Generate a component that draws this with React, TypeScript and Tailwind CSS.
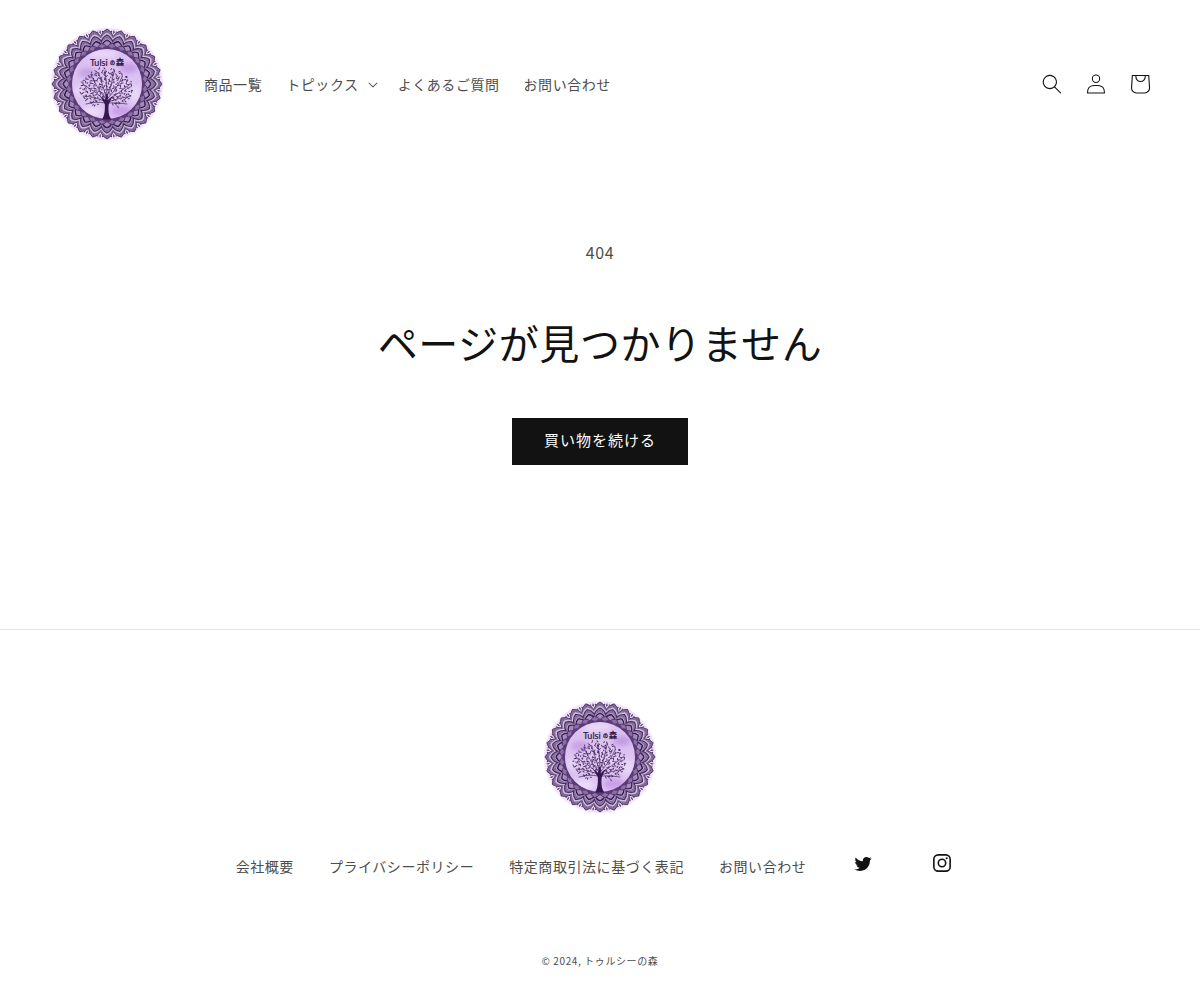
import React from 'react'

const navItems = [
  { label: '商品一覧' },
  { label: 'トピックス', menu: true },
  { label: 'よくあるご質問' },
  { label: 'お問い合わせ' },
]

const footerLinks = ['会社概要', 'プライバシーポリシー', '特定商取引法に基づく表記', 'お問い合わせ']

const PETALS = 24

const polar = (r: number, deg: number) => {
  const a = (deg * Math.PI) / 180
  return `${(56 + r * Math.sin(a)).toFixed(2)} ${(56 - r * Math.cos(a)).toFixed(2)}`
}

// ring of pointed petals around the logo centre, with slightly rounded sides
const ring = (tip: number, valley: number, turn = 0) => {
  const step = 360 / PETALS
  let d = `M${polar(valley, turn - step / 2)}`
  for (let i = 0; i < PETALS; i++) {
    const mid = turn + i * step
    const bulge = valley + (tip - valley) * 0.72
    d += `Q${polar(bulge, mid - step * 0.34)} ${polar(tip, mid)}`
    d += `Q${polar(bulge, mid + step * 0.34)} ${polar(valley, mid + step / 2)}`
  }
  return d + 'z'
}

const petals = Array.from({ length: PETALS }, (_, i) => (i * 360) / PETALS)

// leaves spread over the crown, pointing away from the trunk top
const leaves = Array.from({ length: 230 }, (_, i) => {
  const r = Math.sqrt((i + 0.5) / 230)
  const a = i * 2.39996
  const x = 55.5 + Math.cos(a) * r * 26.5 + Math.sin(i * 3.1) * 0.9
  const y = 60.5 + Math.sin(a) * r * 20 + Math.cos(i * 5.3) * 0.9
  const turn = (Math.atan2(x - 55.5, 72 - y) * 180) / Math.PI + (i % 2 ? 38 : -38)
  return { x, y, turn, size: 1.1 + (i % 3) * 0.25 }
}).filter(({ x, y }) => y < 70 || (Math.abs(x - 55.5) > 6 && y < 79))

const branches = [
  'M55 74Q46 69 32 68',
  'M55 73Q44 63 33 57',
  'M55 71Q47 62 40 47',
  'M55.500 70Q52 58 48 46',
  'M56 70Q56 56 54 43',
  'M56 69Q61 56 63 44',
  'M56 71Q66 61 71 49',
  'M56.500 72Q68 65 78 57',
  'M57 74Q67 70 80 68',
  'M56 75Q66 74 76 76',
  'M54 75Q46 73 35 76',
]

const Logo = ({ id }: { id: string }) => (
  <svg viewBox="0 0 112 112" className="size-28" role="img" aria-label="Tulsiの森">
    <defs>
      <filter id={`${id}-soft`} x="-50%" y="-50%" width="200%" height="200%">
        <feGaussianBlur stdDeviation="2.5" />
      </filter>
      <clipPath id={`${id}-disc`}>
        <circle cx="56" cy="56" r="35" />
      </clipPath>
    </defs>

    <circle cx="56" cy="56" r="56" fill="#f3e4fc" />
    {petals.map((deg) => (
      <g key={deg} transform={`rotate(${deg + 7.5} 56 56)`} fill="#4f3269">
        <path d="M56 1.500l.8 2.200-.8 2.200-.8-2.200z" />
        <circle cx="53.600" cy="3.400" r=".7" />
        <circle cx="58.400" cy="3.400" r=".7" />
      </g>
    ))}
    <path d={ring(55, 48)} fill="#86709b" stroke="#4c3164" strokeWidth=".9" />
    {petals.map((deg) => (
      <path
        key={deg}
        d="M56 3v8M54 6v5M58 6v5M52.300 8v4M59.700 8v4"
        transform={`rotate(${deg} 56 56)`}
        stroke="#58406d"
        strokeWidth=".6"
      />
    ))}
    <path d={ring(51, 45)} fill="#c4aed6" stroke="#dccaea" strokeWidth=".8" />
    <path d={ring(49, 43)} fill="#8f78a6" stroke="#462b5e" strokeWidth="1.1" />
    {petals.map((deg) => (
      <path
        key={deg}
        d="M56 8.500v6M54 11v4M58 11v4"
        transform={`rotate(${deg} 56 56)`}
        stroke="#6b5281"
        strokeWidth=".7"
      />
    ))}
    <path d={ring(45.5, 40.5)} fill="#cdb8df" />
    <path d={ring(44, 39)} fill="#a58dbb" stroke="#35184f" strokeWidth="1.3" />
    <path d={ring(41, 37, 7.5)} fill="#8a6ea4" stroke="#4c3066" strokeWidth=".9" />
    <path d={ring(38.5, 36)} fill="#5b3b78" />

    <circle cx="56" cy="56" r="35" fill="#dcc2f1" />
    <g clipPath={`url(#${id}-disc)`}>
      <g filter={`url(#${id}-soft)`}>
        <ellipse cx="36" cy="45" rx="9" ry="5" fill="#c6a2e4" />
        <ellipse cx="78" cy="40" rx="9" ry="5" fill="#c29be3" />
        <ellipse cx="70" cy="83" rx="11" ry="5" fill="#c79fe9" />
        <ellipse cx="40" cy="84" rx="11" ry="5" fill="#eddcf9" />
        <ellipse cx="30" cy="63" rx="8" ry="6" fill="#e6d2f6" />
        <ellipse cx="84" cy="66" rx="7" ry="8" fill="#e9d6f8" />
        <ellipse cx="52" cy="26" rx="15" ry="4" fill="#ead8f7" />
        <ellipse cx="62" cy="56" rx="16" ry="9" fill="#e2cbf4" />
      </g>
    </g>

    <g fill="none" stroke="#533a69" strokeWidth=".8" strokeLinecap="round">
      {branches.map((d) => (
        <path key={d} d={d} />
      ))}
    </g>
    <g fill="#4a2f62">
      {leaves.map((leaf, i) => (
        <ellipse
          key={i}
          cx={leaf.x.toFixed(1)}
          cy={leaf.y.toFixed(1)}
          rx=".5"
          ry={leaf.size}
          transform={`rotate(${leaf.turn.toFixed(0)} ${leaf.x.toFixed(1)} ${leaf.y.toFixed(1)})`}
        />
      ))}
    </g>
    <path
      d="M51 91.500C53.500 88 54.200 82 53.800 76L49 68l5 4 1-6h1.200l.6 6.500 5-4.500-4 8C57 82 57.500 88 60.500 91.500z"
      fill="#35184f"
    />

    <g fill="#2e1745" stroke="#2e1745" strokeWidth=".2" fontFamily='Lato, "Noto Sans CJK JP", sans-serif'>
      <text x="39" y="38" fontSize="9">
        Tulsi
      </text>
      <text x="59" y="36" fontSize="5" fontWeight="700">
        の
      </text>
      <text x="65" y="37" fontSize="8" fontWeight="700">
        森
      </text>
    </g>
  </svg>
)

const SearchIcon = () => (
  <svg viewBox="0 0 18 19" className="size-5" fill="currentColor" fillRule="evenodd" aria-hidden="true">
    <path d="M11.03 11.68A5.784 5.784 0 112.85 3.5a5.784 5.784 0 018.18 8.18zm.26 1.12a6.78 6.78 0 11.72-.7l5.4 5.4a.5.5 0 11-.71.7l-5.41-5.4z" />
  </svg>
)

const AccountIcon = () => (
  <svg viewBox="0 0 18 19" className="size-5" fill="currentColor" fillRule="evenodd" aria-hidden="true">
    <path d="M6 4.5a3 3 0 116 0 3 3 0 01-6 0zm3-4a4 4 0 100 8 4 4 0 000-8zm5.58 12.15c1.12.82 1.83 2.24 1.91 4.85H1.51c.08-2.6.79-4.03 1.9-4.85C4.66 11.75 6.5 11.5 9 11.5s4.35.26 5.58 1.15zM9 10.5c-2.5 0-4.65.24-6.17 1.35C1.27 12.98.5 14.93.5 18v.5h17V18c0-3.07-.77-5.02-2.33-6.15-1.52-1.1-3.67-1.35-6.17-1.35z" />
  </svg>
)

const CartIcon = () => (
  <svg viewBox="0 0 40 40" className="size-11" fill="currentColor" fillRule="evenodd" aria-hidden="true">
    <path d="M15.75 11.8h-3.16l-.77 11.6a5 5 0 0 0 4.99 5.34h7.38a5 5 0 0 0 4.99-5.33l-.78-11.61zm0 1h-2.22l-.71 10.67a4 4 0 0 0 3.99 4.27h7.38a4 4 0 0 0 4-4.27l-.72-10.67h-2.22v.63a4.75 4.75 0 1 1-9.5 0zm8.5 0h-7.5v.63a3.75 3.75 0 1 0 7.5 0z" />
  </svg>
)

const CaretIcon = () => (
  <svg viewBox="0 0 10 6" className="mt-px w-[10px]" fill="currentColor" aria-hidden="true">
    <path d="M9.354.646a.5.5 0 00-.708 0L5 4.293 1.354.646a.5.5 0 00-.708.708l4 4a.5.5 0 00.708 0l4-4a.5.5 0 000-.708z" />
  </svg>
)

const TwitterIcon = () => (
  <svg viewBox="0 0 18 15" className="w-[18px]" fill="currentColor" aria-hidden="true">
    <path d="M17.64 2.6a7.33 7.33 0 01-1.75 1.82c0 .05 0 .13.02.23l.02.23a9.97 9.97 0 01-1.69 5.54c-.57.85-1.24 1.62-2.02 2.28a9.09 9.09 0 01-2.82 1.6 10.23 10.23 0 01-8.9-.98c.34.02.61.04.83.04 1.64 0 3.1-.5 4.38-1.5a3.6 3.6 0 01-3.3-2.45A2.91 2.91 0 004 9.35a3.47 3.47 0 01-2.02-1.21 3.37 3.37 0 01-.8-2.22v-.03c.46.24.98.37 1.58.4a3.45 3.45 0 01-1.54-2.9c0-.61.14-1.2.45-1.79a9.68 9.68 0 003.2 2.6 10 10 0 004.08 1.07 3 3 0 01-.13-.8c0-.97.34-1.8 1.03-2.48A3.45 3.45 0 0112.4.96a3.49 3.49 0 012.54 1.1c.8-.15 1.54-.44 2.23-.85a3.4 3.4 0 01-1.54 1.94c.74-.1 1.4-.28 2.01-.54z" />
  </svg>
)

const InstagramIcon = () => (
  <svg viewBox="0 0 18 18" className="w-[18px]" fill="none" stroke="currentColor" aria-hidden="true">
    <rect x=".85" y=".85" width="16.3" height="16.3" rx="4.4" strokeWidth="1.6" />
    <circle cx="9" cy="9" r="3.7" strokeWidth="1.6" />
    <circle cx="13.7" cy="4.3" r="1.05" fill="currentColor" stroke="none" />
  </svg>
)

const Header = () => (
  <header className="flex items-center px-[50px] pt-7 pb-[29px]">
    <a href="#" className="mr-[29px] ml-px">
      <Logo id="header" />
    </a>
    <nav className="flex items-center text-sm tracking-[0.04em]">
      {navItems.map((item) =>
        item.menu ? (
          <button key={item.label} type="button" className="flex items-center gap-[9px] py-3 pr-2 pl-3">
            {item.label}
            <CaretIcon />
          </button>
        ) : (
          <a key={item.label} href="#" className="p-3">
            {item.label}
          </a>
        )
      )}
    </nav>
    <div className="-mr-3 ml-auto flex text-[#121212]">
      <button type="button" aria-label="検索" className="flex size-11 items-center justify-center">
        <SearchIcon />
      </button>
      <a href="#" aria-label="ログイン" className="flex size-11 items-center justify-center">
        <AccountIcon />
      </a>
      <a href="#" aria-label="カート" className="flex size-11 items-center justify-center">
        <CartIcon />
      </a>
    </div>
  </header>
)

const Footer = () => (
  <footer className="flex flex-col items-center border-t border-[#e7e7e7] px-[50px] pt-[71px] pb-7">
    <a href="#">
      <Logo id="footer" />
    </a>
    <div className="mt-7 flex flex-wrap items-center justify-center gap-x-[35px] text-sm tracking-[0.04em]">
      {footerLinks.map((label) => (
        <a key={label} href="#" className="pt-1.5">
          {label}
        </a>
      ))}
      <a href="#" aria-label="Twitter" className="flex size-11 items-center justify-center text-[#121212]">
        <TwitterIcon />
      </a>
      <a href="#" aria-label="Instagram" className="flex size-11 items-center justify-center text-[#121212]">
        <InstagramIcon />
      </a>
    </div>
    <p className="mt-[67px] text-[10px] leading-[18px] tracking-[0.06em]">
      © 2024, <a href="#">トゥルシーの森</a>
    </p>
  </footer>
)

const App = () => {
  return (
    <div className="bg-white font-['Noto_Sans_CJK_JP',sans-serif] text-[#4d4d4d]">
      <Header />
      <main className="flex flex-col items-center px-[50px] pt-[69px] pb-[164px] text-center">
        <p className="text-base leading-7 tracking-[0.04em]">404</p>
        <h1 className="mt-[50px] text-[40px] leading-[52px] tracking-[0.015em] text-[#121212]">
          ページが見つかりません
        </h1>
        <a
          href="#"
          className="mt-[50px] flex h-[47px] items-center bg-[#121212] px-8 pb-1 text-[15px] leading-[18px] tracking-[1px] text-white"
        >
          買い物を続ける
        </a>
      </main>
      <Footer />
    </div>
  )
}

export default App
